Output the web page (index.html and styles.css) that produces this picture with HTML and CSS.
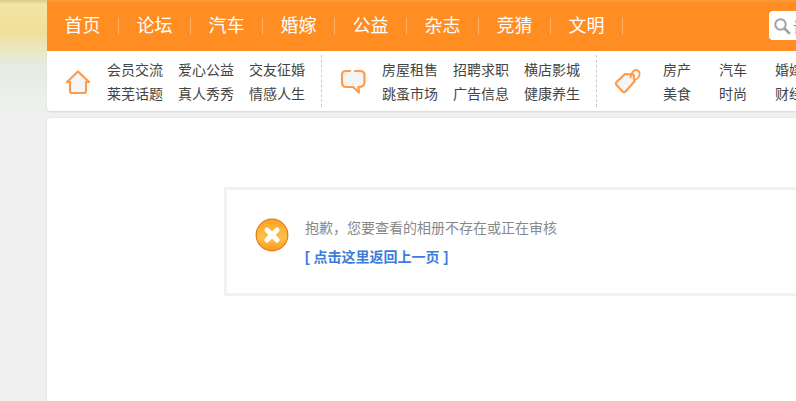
FILE: index.html
```html
<!DOCTYPE html>
<html lang="zh-CN">
<head>
    <meta charset="UTF-8">
    <title>抱歉，您要查看的相册不存在或正在审核</title>
    <link rel="stylesheet" href="styles.css">
</head>
<body>

    <div class="page">
        <!-- 主导航 -->
        <div class="nav">
            <a class="nav-item">首页</a>
            <a class="nav-item">论坛</a>
            <a class="nav-item">汽车</a>
            <a class="nav-item">婚嫁</a>
            <a class="nav-item">公益</a>
            <a class="nav-item">杂志</a>
            <a class="nav-item">竞猜</a>
            <a class="nav-item">文明</a>
            <div class="search">
                <svg class="search-icon" width="18" height="18" viewBox="0 0 18 18">
                    <circle cx="7.5" cy="7.5" r="5.2" fill="none" stroke="#a3a3a3" stroke-width="2"/>
                    <path d="M11.5 11.5 L16 16" stroke="#a3a3a3" stroke-width="2.8" stroke-linecap="round"/>
                </svg>
                <span class="search-text">请输入关键字</span>
            </div>
        </div>

        <!-- 子导航 -->
        <div class="subnav">
            <div class="group group-first">
                <svg class="group-icon" width="26" height="26" viewBox="0 0 26 26">
                    <path d="M13 2.5 L24 13 H21 V22 Q21 24 19 24 H7 Q5 24 5 22 V13 H2 Z" fill="#f5f5f5" stroke="#ff9a4a" stroke-width="2.2" stroke-linejoin="round"/>
                </svg>
                <div class="links">
                    <a>会员交流</a><a>爱心公益</a><a>交友征婚</a>
                    <a>莱芜话题</a><a>真人秀秀</a><a>情感人生</a>
                </div>
            </div>
            <div class="group group-second">
                <svg class="group-icon" width="26" height="26" viewBox="0 0 26 26">
                    <path d="M10 2 H6 Q2 2 2 6 V13 Q2 18 6 18 H13 L19 23.5 L18.5 18 Q24.5 18 24.5 13 V6 Q24.5 2 20 2 H15" fill="#f5f5f5" stroke="#ff9a4a" stroke-width="2.2" stroke-linejoin="round" stroke-linecap="round"/>
                </svg>
                <div class="links">
                    <a>房屋租售</a><a>招聘求职</a><a>横店影城</a>
                    <a>跳蚤市场</a><a>广告信息</a><a>健康养生</a>
                </div>
            </div>
            <div class="group group-third">
                <svg class="group-icon" width="26" height="26" viewBox="0 0 26 26">
                    <path d="M1.5 13 L10 5 L18.5 5.5 L19.5 12.5 L10.5 22.5 Q9 24 7.5 22.5 L1.5 16 Q0.5 14.5 1.5 13 Z" fill="#f5f5f5" stroke="#ff9a4a" stroke-width="2.2" stroke-linejoin="round"/>
                    <path d="M15.5 8.5 Q17 1.5 21 1 Q25 1.5 24.5 5.5 Q24 9.5 19.5 11" fill="none" stroke="#ff9a4a" stroke-width="1.8" stroke-linecap="round"/>
                </svg>
                <div class="links links-short">
                    <a>房产</a><a>汽车</a><a>婚嫁</a>
                    <a>美食</a><a>时尚</a><a>财经</a>
                </div>
            </div>
        </div>

        <!-- 内容 -->
        <div class="content">
            <div class="msg">
                <svg class="msg-icon" width="34" height="34" viewBox="0 0 34 34">
                    <defs>
                        <linearGradient id="errFill" x1="0" y1="0" x2="0" y2="1">
                            <stop offset="0" stop-color="#fba324"/>
                            <stop offset="0.6" stop-color="#ffc04a"/>
                            <stop offset="1" stop-color="#f99a1c"/>
                        </linearGradient>
                    </defs>
                    <circle cx="17" cy="17" r="15.8" fill="url(#errFill)" stroke="#e8780f" stroke-width="1.2"/>
                    <path d="M12 12 L22 22 M22 12 L12 22" stroke="#fff" stroke-width="5" stroke-linecap="round"/>
                </svg>
                <div class="msg-body">
                    <p class="msg-text">抱歉，您要查看的相册不存在或正在审核</p>
                    <a class="msg-link">[ 点击这里返回上一页 ]</a>
                </div>
            </div>
        </div>
    </div>

</body>
</html>
```

FILE: styles.css
```css
/* 基本样式 */
html, body {
    height: 100%;
}

body {
    margin: 0;
    overflow: hidden;
    font-family: "Liberation Sans", "Noto Sans CJK SC", sans-serif;
    background-color: #f0f0f0;
    background-image: linear-gradient(#d9c98a 0, #f3e5a6 4px, #efdf98 32px, #ebe8c2 50px, #e6ebe0 64px, #edf0ec 100px, #f0f0f0 125px);
    background-repeat: no-repeat;
    background-size: 100% 125px;
}

.page {
    width: 1100px;
    margin-left: 47px;
}

/* 主导航 */
.nav {
    display: flex;
    height: 51px;
    align-items: center;
    background: linear-gradient(#ff9e3c 0, #ff8d22 3px);
}

.nav-item {
    width: 71px;
    height: 18px;
    line-height: 18px;
    text-align: center;
    font-size: 18px;
    color: #fff;
    border-right: 1px solid #ffb168;
}

.search {
    display: flex;
    align-items: center;
    width: 180px;
    height: 29px;
    margin-left: 146px;
    padding-left: 4px;
    background: #fff;
    border-radius: 4px;
}

.search-text {
    margin-left: 2px;
    font-size: 14px;
    color: #999;
}

/* 子导航 */
.subnav {
    display: flex;
    height: 60px;
    background: #fff;
    border-radius: 0 0 4px 4px;
    box-shadow: 0 1px 2px rgba(0, 0, 0, 0.1);
}

.group {
    display: flex;
    align-items: center;
    box-sizing: border-box;
    height: 52px;
    margin-top: 4px;
    padding-top: 2px;
    border-right: 1px dashed #ccc;
}

.group-first {
    width: 275px;
}

.group-second {
    width: 275px;
}

.group-third {
    border-right: none;
}

.group-icon {
    flex: none;
    margin-left: 18px;
}

.group-first .links {
    margin-left: 16px;
}

.group-second .links {
    margin-left: 16px;
}

.group-third .links {
    margin-left: 22px;
}

.links {
    display: grid;
    grid-template-columns: repeat(3, 71px);
    grid-auto-rows: 24px;
    font-size: 14px;
    line-height: 24px;
    color: #444;
}

.links-short {
    grid-template-columns: repeat(3, 56px);
}

/* 内容 */
.content {
    height: 300px;
    margin-top: 7px;
    padding: 69px 0 0 177px;
    background: #fff;
    border-radius: 4px 4px 0 0;
    box-shadow: 0 0 2px rgba(0, 0, 0, 0.12);
}

.msg {
    display: flex;
    width: 700px;
    height: 103px;
    border: 3px solid #f2f2f2;
}

.msg-icon {
    flex: none;
    margin: 28px 0 0 28px;
}

.msg-body {
    margin-left: 16px;
    padding-top: 28px;
}

.msg-text {
    margin: 0;
    font-size: 14px;
    line-height: 20px;
    color: #888;
}

.msg-link {
    display: block;
    margin-top: 9px;
    font-size: 14px;
    line-height: 20px;
    font-weight: bold;
    color: #3b7dd8;
}
```
